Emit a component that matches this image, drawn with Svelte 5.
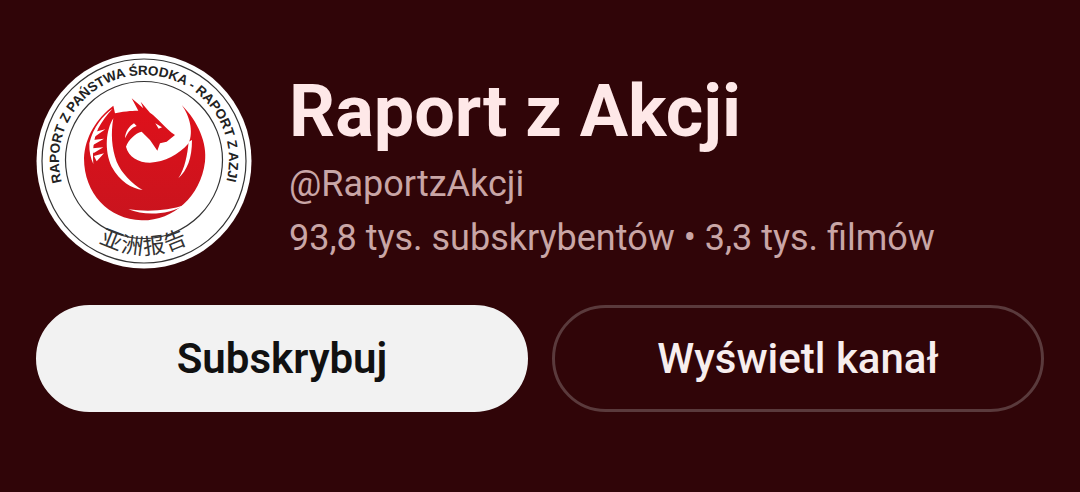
<script>
	const channel = {
		name: 'Raport z Akcji',
		handle: '@RaportzAkcji',
		stats: '93,8 tys. subskrybentów • 3,3 tys. filmów'
	}
</script>

<main>
	<header>
		<svg class="avatar" viewBox="0 0 216 216" aria-hidden="true">
			<circle cx="108" cy="108" r="107.5" fill="#fff" />
			<circle cx="108" cy="108" r="102" fill="none" stroke="#333" stroke-width="1.2" />
			<circle cx="108" cy="107" r="78.5" fill="none" stroke="#333" stroke-width="1.2" />
			<defs>
				<path id="ring" d="M 25.9 129 A 85 85 0 1 1 190.1 129" />
				<path id="low" d="M 26.6 154 A 94 94 0 0 0 189.4 154" />
				<linearGradient id="red" x1="0" y1="0" x2="0" y2="1">
					<stop offset="0" stop-color="#e0101a" />
					<stop offset="1" stop-color="#c9141e" />
				</linearGradient>
			</defs>
			<text class="ring"><textPath href="#ring" textLength="310">RAPORT Z PAŃSTWA ŚRODKA - RAPORT Z AZJI</textPath></text>
			<text class="cjk"><textPath href="#low" startOffset="50%" text-anchor="middle">亚洲报告</textPath></text>
			<g transform="translate(34 37) scale(.3333)">
				<path fill="url(#red)" d="M335 45C385 95 412 160 405 215C392 320 310 392 215 391C115 388 42 310 42 205C45 140 80 85 130 47L135 70C170 62 195 62 205 62L185 25L220 55L212 35L240 68C265 85 285 115 315 135L290 155L270 160L262 182L240 150L215 125C195 130 175 150 168 170C175 200 205 218 240 218C285 216 325 195 356 160C372 125 358 75 335 45Z" />
				<path fill="#fff" d="M130 85C108 120 102 180 125 230C150 275 185 295 218 300C185 280 155 250 140 215C125 175 122 130 130 85Z" />
				<path fill="#fff" d="M175 358C225 378 295 375 345 345C295 362 235 366 175 358Z" />
				<path fill="#fff" d="M356 155C352 195 345 235 325 265C352 240 366 205 366 150Z" />
				<path fill="#fff" d="M128 56C100 75 70 110 58 160C57 185 62 205 70 222C68 190 68 150 85 115C95 95 110 75 128 56Z" />
				<path fill="#fff" d="M76 125L106 118L72 142Z" />
				<path fill="#fff" d="M68 150L102 146L68 166Z" />
				<path fill="#fff" d="M68 175L100 172L70 190Z" />
				<path fill="#fff" d="M72 198L102 190L80 214Z" />
				<path fill="#fff" d="M256 100L276 112L266 116Z" />
				<path fill="#fff" d="M192 100C178 108 166 125 165 145C175 125 185 112 200 108Z" />
			</g>
		</svg>
		<div class="info">
			<h1>{channel.name}</h1>
			<p class="handle">{channel.handle}</p>
			<p class="stats">{channel.stats}</p>
		</div>
	</header>
	<div class="actions">
		<button class="sub">Subskrybuj</button>
		<button class="view">Wyświetl kanał</button>
	</div>
</main>

<style>
	:global(body) {
		margin: 0;
		background: #300508;
	}
	main {
		box-sizing: border-box;
		height: 492px;
		padding: 53px 36px 0;
		background: #300508;
		font-family: Roboto, sans-serif;
		overflow: hidden;
	}
	header {
		display: flex;
		align-items: flex-start;
		gap: 37px;
	}
	.avatar {
		width: 216px;
		height: 216px;
		flex: none;
	}
	.ring {
		font-family: "Liberation Sans", sans-serif;
		font-size: 13.5px;
		font-weight: 700;
		fill: #222;
	}
	.cjk {
		font-family: "Noto Sans CJK SC", sans-serif;
		font-size: 22px;
		fill: #333;
		letter-spacing: 1.5px;
	}
	.info {
		display: flex;
		flex-direction: column;
		padding-top: 18px;
	}
	h1 {
		margin: 0;
		font-size: 72px;
		line-height: 82px;
		font-weight: 700;
		color: #fee8e8;
	}
	p {
		margin: 0;
		font-size: 36px;
		line-height: 54px;
		color: #c9a6a6;
	}
	.handle {
		margin-top: 4px;
	}
	.actions {
		display: flex;
		gap: 24px;
		margin-top: 36px;
	}
	button {
		flex: 1 1 0;
		height: 107px;
		border: 3px solid transparent;
		border-radius: 54px;
		font-family: Roboto, sans-serif;
		font-size: 42px;
		font-weight: 600;
		padding: 0;
	}
	.sub {
		background: #f2f2f2;
		border-color: #f2f2f2;
		color: #111;
	}
	.view {
		background: transparent;
		border-color: #5a3a3c;
		color: #f7eeee;
		font-weight: 500;
	}
</style>
